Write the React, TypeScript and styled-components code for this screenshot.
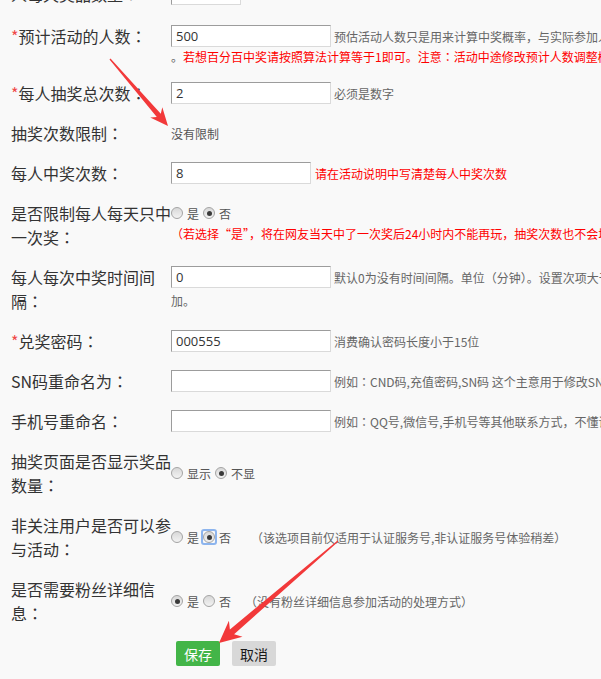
import React from "react";
import styled, { createGlobalStyle, css } from "styled-components";

const GlobalStyle = createGlobalStyle`
  html, body { margin: 0; padding: 0; background: #f9f9f9; overflow: hidden; }
  body { font-family: "Noto Sans CJK SC", "Noto Sans", sans-serif; }
`;

const Page = styled.div`
  position: relative;
  width: 601px;
  height: 679px;
  overflow: hidden;
  background: #f9f9f9;
`;

const Form = styled.div`
  width: 1000px;
  padding-left: 11px;
  margin-top: -18px;
  font-family: "Noto Sans CJK SC", sans-serif;
`;

const Row = styled.div<{ $align?: "start" | "center"; $gap?: number }>`
  display: grid;
  grid-template-columns: 160px auto;
  align-items: ${(p) => p.$align ?? "start"};
  margin-bottom: ${(p) => p.$gap ?? 16}px;
`;

const Label = styled.div`
  font-size: 16px;
  line-height: 24px;
  color: #333;
`;

const Star = styled.span`
  color: #f04848;
`;

/* centred full-width colon, as the reference's font draws it */
const Colon = styled.span`
  font-family: "Noto Sans CJK JP", "Noto Sans CJK SC", sans-serif;
`;

const Field = styled.div`
  display: flex;
  flex-direction: column;
  min-width: 0;
`;

const Line = styled.div`
  display: flex;
  align-items: center;
  height: 24px;
  white-space: nowrap;
`;

const Input = styled.input<{ $w: number }>`
  box-sizing: border-box;
  width: ${(p) => p.$w}px;
  height: 22px;
  margin: 0;
  padding: 0 4px;
  border: 1px solid;
  border-color: #9c9c9c #dadada #dadada #9c9c9c;
  background: #fff;
  font: 13px "Open Sans", "Noto Sans CJK SC", sans-serif;
  color: #333;
  outline: none;
  flex: none;
`;

const Hint = styled.span<{ $red?: boolean; $ml?: number }>`
  margin-left: ${(p) => p.$ml ?? 3}px;
  font-size: 12px;
  color: ${(p) => (p.$red ? "#f00" : "#666")};
  white-space: nowrap;
`;

const SubLine = styled.div<{ $lh: number; $red?: boolean }>`
  font-size: 12px;
  line-height: ${(p) => p.$lh}px;
  color: ${(p) => (p.$red ? "#f00" : "#666")};
  white-space: nowrap;
`;

const Red = styled.span`
  color: #f00;
`;

const Value = styled.span`
  font-size: 12px;
  color: #555;
`;

const RadioMark = styled.span<{ $checked?: boolean; $focus?: boolean }>`
  position: relative;
  flex: none;
  box-sizing: border-box;
  width: 12px;
  height: 12px;
  border-radius: 50%;
  border: 1px solid #a4a4a4;
  background: linear-gradient(#d8d8d8, #f3f3f3);
  ${(p) =>
    p.$checked &&
    css`
      &::after {
        content: "";
        position: absolute;
        left: 2.5px;
        top: 2.5px;
        width: 5px;
        height: 5px;
        border-radius: 50%;
        background: #3a3a3a;
      }
    `}
  ${(p) =>
    p.$focus &&
    css`
      &::before {
        content: "";
        position: absolute;
        left: -3px;
        top: -3px;
        right: -3px;
        bottom: -3px;
        border: 2px solid #8db5ee;
        border-radius: 3px;
      }
    `}
`;

const RadioText = styled.span`
  font-size: 12px;
  color: #555;
  margin: 0 4px;
  line-height: 24px;
  padding-top: 2px;
`;

const Actions = styled.div`
  display: flex;
  gap: 12px;
  padding-left: 165px;
`;

const Button = styled.button<{ $primary?: boolean }>`
  width: 44px;
  height: 25px;
  padding: 0;
  border: none;
  border-radius: 2px;
  background: ${(p) => (p.$primary ? "#43b548" : "#d8d8d8")};
  color: ${(p) => (p.$primary ? "#fff" : "#1a1a1a")};
  font: 14px "Noto Sans CJK SC", sans-serif;
`;

const Overlay = styled.svg`
  position: absolute;
  left: 0;
  top: 0;
  pointer-events: none;
`;

type RadioOpt = { text: string; checked?: boolean; focus?: boolean };

const RadioGroup: React.FC<{ options: RadioOpt[] }> = ({ options }) => (
  <>
    {options.map((o) => (
      <React.Fragment key={o.text}>
        <RadioMark $checked={o.checked} $focus={o.focus} />
        <RadioText>{o.text}</RadioText>
      </React.Fragment>
    ))}
  </>
);

function arrowPoints(
  tx: number,
  ty: number,
  px: number,
  py: number,
  headLen: number,
  headW: number,
  shaftW: number,
  tailW: number
): string {
  const dx = px - tx;
  const dy = py - ty;
  const L = Math.hypot(dx, dy);
  const ux = dx / L;
  const uy = dy / L;
  const nx = -uy;
  const ny = ux;
  const jx = px - ux * headLen * 0.78;
  const jy = py - uy * headLen * 0.78;
  const bx = px - ux * headLen;
  const by = py - uy * headLen;
  const pts = [
    [tx + nx * tailW, ty + ny * tailW],
    [jx + nx * shaftW, jy + ny * shaftW],
    [bx + nx * headW, by + ny * headW],
    [px, py],
    [bx - nx * headW, by - ny * headW],
    [jx - nx * shaftW, jy - ny * shaftW],
    [tx - nx * tailW, ty - ny * tailW],
  ];
  return pts.map((p) => `${p[0].toFixed(1)},${p[1].toFixed(1)}`).join(" ");
}

const C = () => <Colon>：</Colon>;

export default function App() {
  return (
    <Page>
      <GlobalStyle />
      <Form>
        <Row $gap={18}>
          <Label>
            人每天奖品数量<C />
          </Label>
          <Field>
            <Line>
              <Input $w={70} value="10" readOnly />
            </Line>
          </Field>
        </Row>

        <Row>
          <Label>
            <Star>*</Star>预计活动的人数<C />
          </Label>
          <Field>
            <Line>
              <Input $w={160} value="500" readOnly />
              <Hint>预估活动人数只是用来计算中奖概率，与实际参加人数无关</Hint>
            </Line>
            <SubLine $lh={17}>
              。<Red>
                若想百分百中奖请按照算法计算等于1即可。注意<C />活动中途修改预计人数调整概率会影响中奖
              </Red>
            </SubLine>
          </Field>
        </Row>

        <Row>
          <Label>
            <Star>*</Star>每人抽奖总次数<C />
          </Label>
          <Field>
            <Line>
              <Input $w={160} value="2" readOnly />
              <Hint>必须是数字</Hint>
            </Line>
          </Field>
        </Row>

        <Row>
          <Label>
            抽奖次数限制<C />
          </Label>
          <Field>
            <Line>
              <Value>没有限制</Value>
            </Line>
          </Field>
        </Row>

        <Row>
          <Label>
            每人中奖次数<C />
          </Label>
          <Field>
            <Line>
              <Input $w={140} value="8" readOnly />
              <Hint $red $ml={4}>
                请在活动说明中写清楚每人中奖次数
              </Hint>
            </Line>
          </Field>
        </Row>

        <Row>
          <Label>
            是否限制每人每天只中一次奖<C />
          </Label>
          <Field>
            <Line>
              <RadioGroup options={[{ text: "是" }, { text: "否", checked: true }]} />
            </Line>
            <SubLine $lh={18} $red>
              （若选择“是”，将在网友当天中了一次奖后24小时内不能再玩，抽奖次数也不会增加）
            </SubLine>
          </Field>
        </Row>

        <Row>
          <Label>
            每人每次中奖时间间隔<C />
          </Label>
          <Field>
            <Line>
              <Input $w={160} value="0" readOnly />
              <Hint>默认0为没有时间间隔。单位（分钟）。设置次项大于0抽奖次数将会增</Hint>
            </Line>
            <SubLine $lh={24}>加。</SubLine>
          </Field>
        </Row>

        <Row>
          <Label>
            <Star>*</Star>兑奖密码<C />
          </Label>
          <Field>
            <Line>
              <Input $w={160} value="000555" readOnly />
              <Hint>消费确认密码长度小于15位</Hint>
            </Line>
          </Field>
        </Row>

        <Row>
          <Label>
            SN码重命名为<C />
          </Label>
          <Field>
            <Line>
              <Input $w={160} value="" readOnly />
              <Hint>
                例如<C />CND码,充值密码,SN码 这个主意用于修改SN码的名称
              </Hint>
            </Line>
          </Field>
        </Row>

        <Row>
          <Label>
            手机号重命名<C />
          </Label>
          <Field>
            <Line>
              <Input $w={160} value="" readOnly />
              <Hint>
                例如<C />QQ号,微信号,手机号等其他联系方式，不懂请留空
              </Hint>
            </Line>
          </Field>
        </Row>

        <Row $align="center">
          <Label>
            抽奖页面是否显示奖品数量<C />
          </Label>
          <Field>
            <Line>
              <RadioGroup options={[{ text: "显示" }, { text: "不显", checked: true }]} />
            </Line>
          </Field>
        </Row>

        <Row $align="center">
          <Label>
            非关注用户是否可以参与活动<C />
          </Label>
          <Field>
            <Line>
              <RadioGroup options={[{ text: "是" }, { text: "否", checked: true, focus: true }]} />
              <Hint $ml={16}>（该选项目前仅适用于认证服务号,非认证服务号体验稍差）</Hint>
            </Line>
          </Field>
        </Row>

        <Row $align="center">
          <Label>
            是否需要粉丝详细信息<C />
          </Label>
          <Field>
            <Line>
              <RadioGroup options={[{ text: "是", checked: true }, { text: "否" }]} />
              <Hint $ml={10}>（没有粉丝详细信息参加活动的处理方式）</Hint>
            </Line>
          </Field>
        </Row>

        <Actions>
          <Button $primary>保存</Button>
          <Button>取消</Button>
        </Actions>
      </Form>

      <Overlay width={601} height={679} viewBox="0 0 601 679">
        <polygon points={arrowPoints(110, 59, 168, 126, 18, 8, 2.6, 0.6)} fill="#f2393a" />
        <polygon points={arrowPoints(338, 541, 219, 643, 22, 10.5, 3.2, 0.6)} fill="#f2393a" />
      </Overlay>
    </Page>
  );
}
